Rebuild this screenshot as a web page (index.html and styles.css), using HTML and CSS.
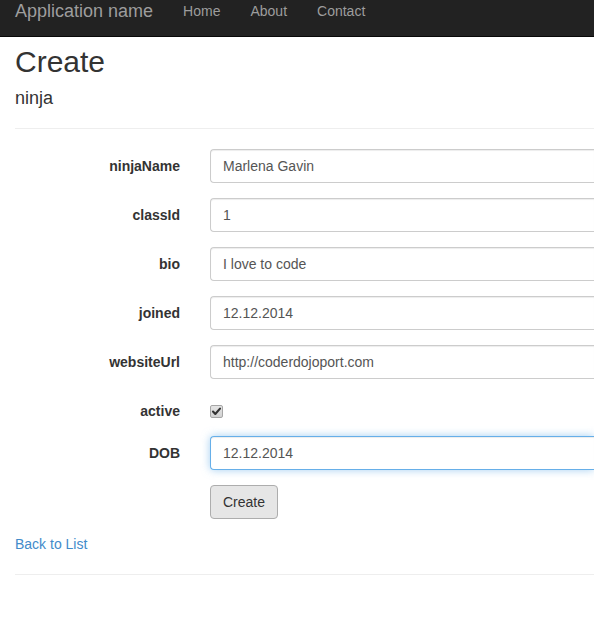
FILE: index.html
```html
<!DOCTYPE html>
<html>
<head>
<meta charset="utf-8">
<title>Create</title>
<link rel="stylesheet" href="styles.css">
</head>
<body>
<div class="navbar">
  <div class="nav-inner">
    <a class="brand" href="#">Application name</a>
    <ul class="nav">
      <li><a href="#">Home</a></li>
      <li><a href="#">About</a></li>
      <li><a href="#">Contact</a></li>
    </ul>
  </div>
</div>
<div class="container">
  <h2 class="title">Create</h2>
  <form class="form-horizontal">
    <h4 class="subtitle">ninja</h4>
    <hr class="rule">
    <div class="form-group">
      <label class="control-label">ninjaName</label>
      <div class="field"><input class="form-control" type="text" value="Marlena Gavin"></div>
    </div>
    <div class="form-group">
      <label class="control-label">classId</label>
      <div class="field"><input class="form-control" type="text" value="1"></div>
    </div>
    <div class="form-group">
      <label class="control-label">bio</label>
      <div class="field"><input class="form-control" type="text" value="I love to code"></div>
    </div>
    <div class="form-group">
      <label class="control-label">joined</label>
      <div class="field"><input class="form-control" type="text" value="12.12.2014"></div>
    </div>
    <div class="form-group">
      <label class="control-label">websiteUrl</label>
      <div class="field"><input class="form-control" type="text" value="http://coderdojoport.com"></div>
    </div>
    <div class="form-group">
      <label class="control-label">active</label>
      <div class="field">
        <div class="checkbox">
          <span class="check-box"><svg width="11" height="11" viewBox="0 0 11 11"><path d="M2 5.6 L4.3 8 L9 2.6" fill="none" stroke="#333" stroke-width="2.1" stroke-linecap="round" stroke-linejoin="round"/></svg></span>
        </div>
      </div>
    </div>
    <div class="form-group">
      <label class="control-label">DOB</label>
      <div class="field"><input class="form-control focused" type="text" value="12.12.2014"></div>
    </div>
    <div class="form-group">
      <div class="spacer"></div>
      <div class="field"><button type="button" class="btn">Create</button></div>
    </div>
  </form>
  <div class="back"><a href="#">Back to List</a></div>
  <hr class="footer-rule">
</div>
</body>
</html>
```
FILE: styles.css
```css
html, body {
  margin: 0;
  padding: 0;
  overflow: hidden;
  background: #fff;
}
body {
  font-family: "Liberation Sans", Arial, sans-serif;
  font-size: 14px;
  line-height: 20px;
  color: #333;
}
a { text-decoration: none; }

.navbar {
  background: #222;
  border-bottom: 1px solid #080808;
  height: 36px;
}
.nav-inner {
  display: flex;
  align-items: flex-start;
  padding-top: 1px;
  padding-left: 15px;
}
.brand {
  font-size: 18px;
  line-height: 20px;
  color: #9d9d9d;
  padding-right: 15px;
  white-space: nowrap;
}
.nav {
  display: flex;
  list-style: none;
  margin: 0;
  padding: 0;
}
.nav a {
  display: block;
  padding: 0 15px;
  color: #9d9d9d;
  font-size: 14px;
  line-height: 20px;
}

.container {
  padding: 0 0 0 15px;
}
.title {
  font-size: 30px;
  font-weight: 500;
  line-height: 33px;
  margin: 8px 0 0;
}
.subtitle {
  font-size: 18px;
  font-weight: 500;
  line-height: 20px;
  margin: 10px 0 0;
}
.rule {
  margin: 20px 0 20px;
  border: 0;
  border-top: 1px solid #eee;
}
.form-group {
  display: flex;
  align-items: flex-start;
  margin-bottom: 15px;
}
.control-label,
.spacer {
  width: 165px;
  flex: none;
  text-align: right;
  font-weight: bold;
  padding-top: 7px;
  line-height: 20px;
}
.spacer { padding-top: 0; }
.field {
  margin-left: 30px;
  flex: 1;
  min-width: 0;
}
.form-control {
  display: block;
  box-sizing: border-box;
  width: 100%;
  height: 34px;
  padding: 6px 12px;
  font-family: "Liberation Sans", Arial, sans-serif;
  font-size: 14px;
  line-height: 20px;
  color: #555;
  background: #fff;
  border: 1px solid #ccc;
  border-right-width: 0;
  border-radius: 4px 0 0 4px;
  box-shadow: inset 0 1px 1px rgba(0,0,0,.075);
  outline: none;
  margin: 0;
}
.form-control.focused {
  border-color: #66afe9;
  box-shadow: inset 0 1px 1px rgba(0,0,0,.075), 0 0 8px rgba(102,175,233,.6);
}
.checkbox {
  min-height: 27px;
  box-sizing: border-box;
  padding-top: 11px;
}
.check-box {
  display: flex;
  align-items: center;
  justify-content: center;
  box-sizing: border-box;
  width: 13px;
  height: 13px;
  border: 1px solid #a6a6a6;
  border-radius: 2px;
  background: linear-gradient(#e4e4e4, #d2d2d2);
}
.check-box svg { display: block; }
.btn {
  display: block;
  box-sizing: border-box;
  height: 34px;
  padding: 6px 12px;
  font-family: "Liberation Sans", Arial, sans-serif;
  font-size: 14px;
  line-height: 20px;
  color: #333;
  background: #e6e6e6;
  border: 1px solid #adadad;
  border-radius: 4px;
  margin: 0;
}
.back {
  line-height: 20px;
}
.back a { color: #428bca; }
.footer-rule {
  margin: 20px 0;
  border: 0;
  border-top: 1px solid #eee;
}
```
